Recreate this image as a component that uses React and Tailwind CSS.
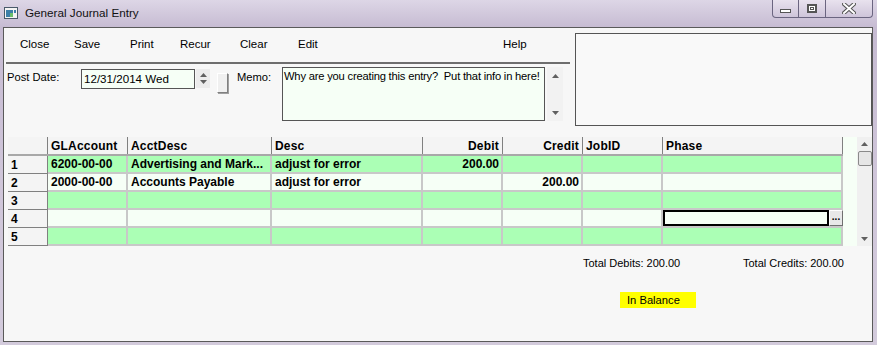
import React from "react";

const cols = [
  { w: "w-[80px]", label: "GLAccount" },
  { w: "w-[144px]", label: "AcctDesc" },
  { w: "w-[151px]", label: "Desc" },
  { w: "w-[80px]", label: "Debit", right: true },
  { w: "w-[80px]", label: "Credit", right: true },
  { w: "w-[80px]", label: "JobID" },
  { w: "w-[180px]", label: "Phase" },
];

const rows = [
  ["6200-00-00", "Advertising and Mark...", "adjust for error", "200.00", "", "", ""],
  ["2000-00-00", "Accounts Payable", "adjust for error", "", "200.00", "", ""],
  ["", "", "", "", "", "", ""],
  ["", "", "", "", "", "", ""],
  ["", "", "", "", "", "", ""],
];

function UpArrow() {
  return (
    <svg width="7" height="4" viewBox="0 0 7 4">
      <path d="M0 4 L3.5 0 L7 4 Z" fill="#606060" />
    </svg>
  );
}
function DownArrow() {
  return (
    <svg width="7" height="4" viewBox="0 0 7 4">
      <path d="M0 0 L3.5 4 L7 0 Z" fill="#606060" />
    </svg>
  );
}

function AppIcon() {
  return (
    <svg width="14" height="12" viewBox="0 0 14 12">
      <rect x="0.5" y="0.5" width="13" height="11" fill="#f4f4f4" stroke="#4a5a6a" />
      <rect x="2" y="3" width="7" height="7" fill="#3d7fa8" />
      <rect x="6" y="6" width="3" height="4" fill="#6bbf6b" />
      <rect x="10" y="3" width="2" height="3" fill="#3d7fa8" />
    </svg>
  );
}

export default function App() {
  return (
    <div
      className="w-[877px] h-[345px] flex flex-col overflow-hidden bg-[linear-gradient(180deg,#ddd6e6_0%,#c6bbd2_8%,#cfc5d9_50%,#d3cbdc_100%)]"
      style={{ fontFamily: '"Liberation Sans", Arial, sans-serif' }}
    >
      {/* Title bar */}
      <div className="h-[27px] flex items-start shrink-0">
        <div className="ml-[4px] mt-[7px]">
          <AppIcon />
        </div>
        <div className="ml-[7px] mt-[5px] text-[11.7px] leading-[16px] text-[#111]">General Journal Entry</div>
        <div className="ml-auto mr-[4px] flex h-[18px] border border-t-0 border-[#6b6580] rounded-b-[4px] overflow-hidden bg-[linear-gradient(180deg,#e8e2ee,#cfc5da)]">
          <div className="w-[26px] flex items-center justify-center border-r border-[#6b6580]">
            <div className="w-[11px] h-[4px] mt-[5px] bg-white border border-[#555]" />
          </div>
          <div className="w-[27px] flex items-center justify-center border-r border-[#6b6580]">
            <div className="w-[10px] h-[9px] border-2 border-[#555] bg-white flex items-center justify-center">
              <div className="w-[4px] h-[3px] border border-[#555]" />
            </div>
          </div>
          <div className="w-[46px] flex items-center justify-center">
            <svg width="14" height="11" viewBox="0 0 14 11">
              <path d="M2 1 L12 10 M12 1 L2 10" stroke="#555" strokeWidth="4" strokeLinecap="square" />
              <path d="M2 1 L12 10 M12 1 L2 10" stroke="#fff" strokeWidth="2" strokeLinecap="square" />
            </svg>
          </div>
        </div>
      </div>

      {/* Client area */}
      <div className="flex-1 ml-[3px] mr-[4px] mb-[3px] border border-[#5a5a5a] bg-[#f7f7f7] flex flex-col text-[11px] text-black">
        {/* Top region */}
        <div className="flex h-[99px]">
          <div className="w-[567px] flex flex-col">
            <div className="h-[34px] flex items-center text-[11.5px]">
              <span className="ml-[16px] w-[54px]">Close</span>
              <span className="w-[56px]">Save</span>
              <span className="w-[50px]">Print</span>
              <span className="w-[60px]">Recur</span>
              <span className="w-[58px]">Clear</span>
              <span className="w-[205px]">Edit</span>
              <span>Help</span>
            </div>
            <div className="ml-[2px] w-[564px] h-[2px] bg-[#6e6e6e]" />
            <div className="mt-[3px] h-[54px] flex items-start">
              <div className="w-[77px] pl-[3px] mt-[3px] text-[11.2px] leading-[14px]">Post Date:</div>
              <div className="mt-[2px] w-[114px] h-[20px] border border-[#555] bg-[#f6fff6] px-[2px] text-[11.6px] leading-[18px]">
                12/31/2014 Wed
              </div>
              <div className="mt-[2px] ml-[1px] w-[14px] h-[19px] bg-[#ececec] flex flex-col items-center justify-center gap-[3px]">
                <UpArrow />
                <DownArrow />
              </div>
              <div className="mt-[6px] ml-[7px] w-[11px] h-[20px] bg-[#f0f0f0] border border-t-[#ffffff] border-l-[#ffffff] border-r-[#808080] border-b-[#808080] shadow-[1px_1px_0_#a0a0a0]" />
              <div className="ml-[9px] w-[45px] mt-[3px] text-[11.2px] leading-[14px]">Memo:</div>
              <div className="w-[263px] h-[54px] border border-[#555] bg-[#f6fff6] pl-[1px] pt-[1px] text-[11.2px] leading-[14px] tracking-[-0.2px] whitespace-nowrap overflow-hidden">
                Why are you creating this entry?&nbsp; Put that info in here!
              </div>
              <div className="ml-[2px] w-[16px] h-[54px] bg-[#f2f2f2] flex flex-col items-center justify-between pt-[7px] pb-[6px]">
                <UpArrow />
                <DownArrow />
              </div>
            </div>
          </div>
          <div className="ml-[4px] mt-[5px] w-[297px] h-[93px] border border-[#555] bg-[#f9f9f9]" />
        </div>

        {/* Grid */}
        <div className="mt-[10px] ml-[4px] flex">
          <div className="flex flex-col text-[12px] font-bold">
            <div className="flex h-[19px] bg-[#f4f4f4] border-b-2 border-[#a8a8a8]">
              <div className="w-[40px] border-r border-[#808080]" />
              {cols.map((c, i) => (
                <div
                  key={i}
                  className={`${c.w} ${c.right ? "text-right pr-[3px]" : "pl-[3px]"} border-r border-[#808080] leading-[19px] tracking-[0.2px] overflow-hidden whitespace-nowrap`}
                >
                  {c.label}
                </div>
              ))}
            </div>
            {rows.map((r, ri) => {
              const green = ri % 2 === 0;
              return (
                <div key={ri} className="flex h-[18px]">
                  <div className="w-[40px] bg-[#f4f4f4] border-r border-b border-[#808080] pl-[3px] leading-[18px]">
                    {ri + 1}
                  </div>
                  {cols.map((c, ci) => {
                    const selected = ri === 3 && ci === 6;
                    if (selected) {
                      return (
                        <div key={ci} className={`${c.w} flex border-b-2 border-[#c8c8c8]`}>
                          <div className="flex-1 border-2 border-black bg-[#f6fff6]" />
                          <div className="w-[14px] bg-[#e8e8e8] border border-t-white border-l-white border-r-[#707070] border-b-[#707070] text-[10px] leading-[12px] text-center">
                            ...
                          </div>
                        </div>
                      );
                    }
                    return (
                      <div
                        key={ci}
                        className={`${c.w} ${green ? "bg-[#abffb5]" : "bg-[#f6fff6]"} border-r-2 border-b-2 border-[#c8c8c8] ${c.right ? "text-right pr-[2px]" : "pl-[3px]"} leading-[17px] overflow-hidden whitespace-nowrap`}
                      >
                        {r[ci]}
                      </div>
                    );
                  })}
                </div>
              );
            })}
          </div>
          <div className="w-[14px] bg-[#f6fff6]" />
          <div className="w-[15px] bg-[#f0f0f0] flex flex-col items-center py-[5px]">
            <UpArrow />
            <div className="mt-[5px] w-[14px] h-[15px] bg-[#e6e6e6] border border-[#8a8a8a] rounded-[2px]" />
            <div className="flex-1" />
            <DownArrow />
          </div>
        </div>

        {/* Totals */}
        <div className="mt-[10px] flex h-[14px] text-[11px] leading-[14px]">
          <span className="ml-[579px] w-[160px]">Total Debits: 200.00</span>
          <span>Total Credits: 200.00</span>
        </div>
        <div className="mt-[22px] ml-[616px] w-[76px] h-[16px] bg-[#ffff00] pl-[7px] text-[11.2px] leading-[16px]">
          In Balance
        </div>
      </div>
    </div>
  );
}
